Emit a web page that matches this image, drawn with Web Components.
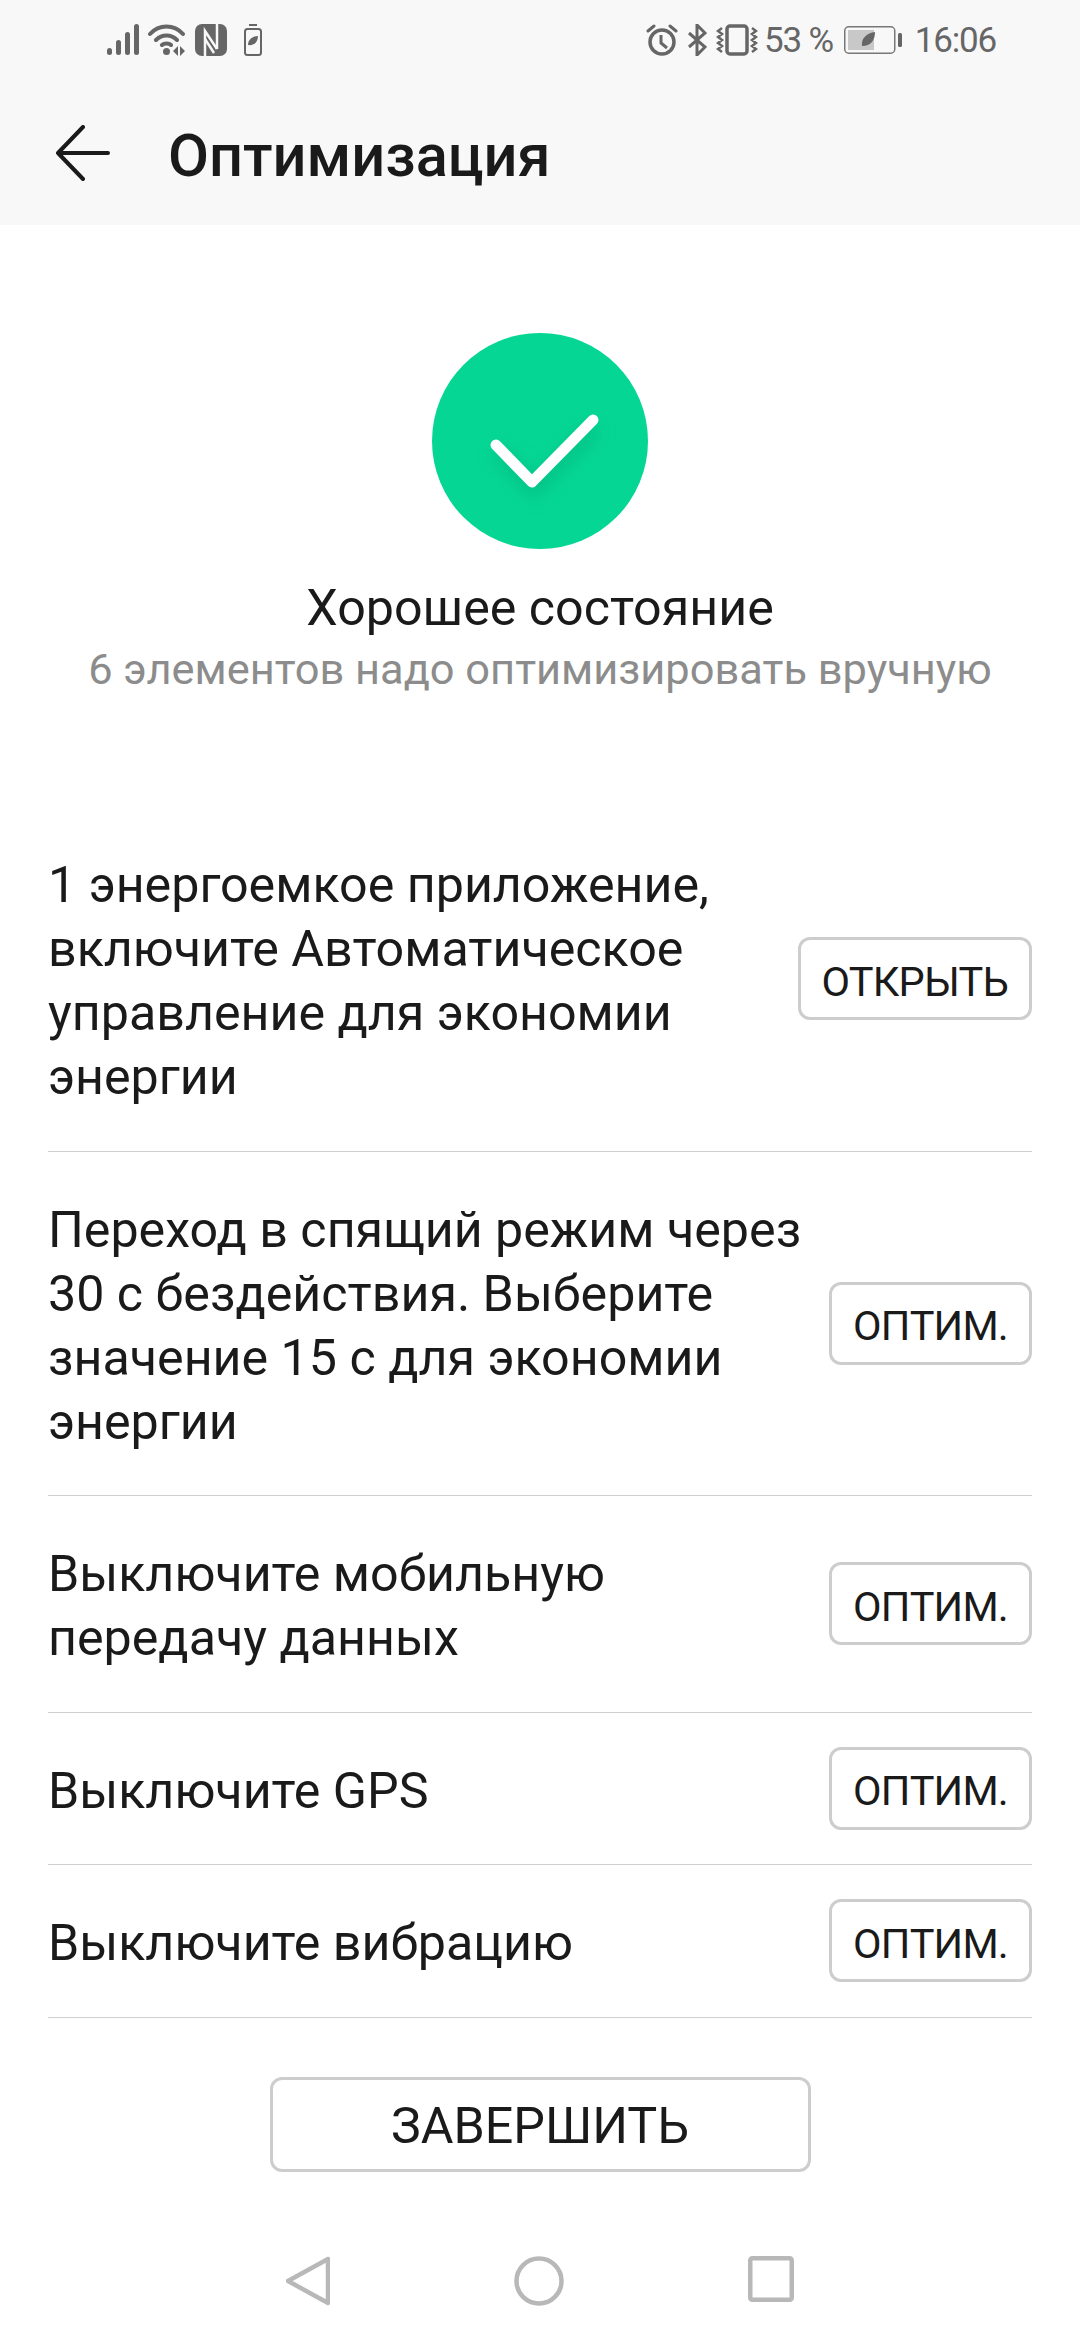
<!DOCTYPE html>
<html lang="ru">
<head>
<meta charset="utf-8">
<title>Оптимизация</title>
<style>
  html, body { margin: 0; background: #fff; }
  body { width: 1080px; height: 2340px; overflow: hidden; font-family: Roboto, "Noto Sans", sans-serif; color: #1a1a1a; }
</style>
</head>
<body>
<status-bar></status-bar>
<app-bar>Оптимизация</app-bar>
<opt-hero heading="Хорошее состояние" sub="6 элементов надо оптимизировать вручную"></opt-hero>
<opt-list>
  <opt-row action="ОТКРЫТЬ">1 энергоемкое приложение, включите Автоматическое управление для экономии энергии</opt-row>
  <opt-row action="ОПТИМ.">Переход в спящий режим через 30 с бездействия. Выберите значение 15 с для экономии энергии</opt-row>
  <opt-row action="ОПТИМ.">Выключите мобильную передачу данных</opt-row>
  <opt-row action="ОПТИМ.">Выключите GPS</opt-row>
  <opt-row action="ОПТИМ.">Выключите вибрацию</opt-row>
</opt-list>
<finish-bar>ЗАВЕРШИТЬ</finish-bar>
<nav-bar></nav-bar>

<script>
// status bar, all icons drawn by hand
class StatusBar extends HTMLElement {
  constructor () {
    super();
    this.attachShadow({mode: 'open'}).innerHTML = `
      <style>
      :host {
        display: flex;
        align-items: center;
        height: 80px;
        box-sizing: border-box;
        padding: 0 84px 0 107px;
        background: #f8f8f8;
        color: #666;
        font: 35px Roboto, sans-serif;
        letter-spacing: -1.2px;
      }
      svg { display: block; flex: none; }
      .spacer { flex: 1; }
      .pct { margin-left: 6px; }
      .time { margin-left: 13px; }
      </style>
      <svg width="32" height="32" viewBox="0 0 32 32" fill="#666" style="margin-right:9px">
        <rect x="0" y="24" width="5" height="7" rx="2.5"/>
        <rect x="9" y="16" width="5" height="15" rx="2.5"/>
        <rect x="18" y="8" width="5" height="23" rx="2.5"/>
        <rect x="27" y="0" width="5" height="31" rx="2.5"/>
      </svg>
      <svg width="38" height="32" viewBox="0 0 38 32" style="margin-right:9px">
        <path d="M2 10C11 0 26 0 35 10M8 16C14 10 23 10 29 16M14 21C16 19 21 19 23 21" fill="none" stroke="#666" stroke-width="4" stroke-linecap="round"/>
        <circle cx="18.500" cy="27.500" r="3.500" fill="#666"/>
        <path d="M25 27l5-5v10zM32 22v10l5-5z" fill="#666"/>
      </svg>
      <svg width="32" height="32" viewBox="0 0 32 32" style="margin-right:17px">
        <rect width="32" height="32" rx="7" fill="#666"/>
        <path d="M10 32V7l12 18" fill="none" stroke="#f8f8f8" stroke-width="2.500"/>
        <path d="M22 0v25M10 15l9 14" fill="none" stroke="#f8f8f8" stroke-width="2.500"/>
      </svg>
      <svg width="18" height="32" viewBox="0 0 18 32">
        <path d="M5 1h8" stroke="#666" stroke-width="2"/>
        <rect x="1" y="5" width="16" height="26" rx="2.500" fill="none" stroke="#666" stroke-width="2"/>
        <path d="M4 21C4 15 9 12 14 12C14 18 10 22 4 21z" fill="#666"/>
      </svg>
      <div class="spacer"></div>
      <svg width="32" height="32" viewBox="0 0 32 32" style="margin-right:9px">
        <circle cx="16" cy="18" r="12" fill="none" stroke="#666" stroke-width="3.500"/>
        <path d="M15 11v8l6 5" fill="none" stroke="#666" stroke-width="3"/>
        <path d="M2 7l6-5M30 7l-6-5" stroke="#666" stroke-width="3" stroke-linecap="round"/>
      </svg>
      <svg width="20" height="32" viewBox="0 0 20 32" style="margin-right:9px">
        <path d="M2 9l16 14-8 8V1l8 8L2 23" fill="none" stroke="#666" stroke-width="3"/>
      </svg>
      <svg width="42" height="32" viewBox="0 0 42 32">
        <rect x="11" y="2" width="20" height="28" rx="3" fill="none" stroke="#666" stroke-width="3.500"/>
        <path d="M6 4l-4 3 4 3-4 3 4 3-4 3 4 3-4 3 4 3M36 4l4 3-4 3 4 3-4 3 4 3-4 3 4 3-4 3" fill="none" stroke="#666" stroke-width="2.500"/>
      </svg>
      <span class="pct">53 %</span>
      <svg width="58" height="28" viewBox="0 0 58 28" style="margin-left:11px">
        <rect x="0.750" y="0.750" width="50" height="26.500" rx="4" fill="none" stroke="#777" stroke-width="1.500"/>
        <rect x="4" y="4" width="26" height="20" fill="#c8c8c8"/>
        <path d="M18 20C17 12 23 7 31 6C31 14 27 20 18 20z" fill="#666"/>
        <rect x="54" y="7" width="4" height="14" rx="1.500" fill="#666"/>
      </svg>
      <span class="time">16:06</span>
    `;
  }
}
customElements.define('status-bar', StatusBar);

class AppBar extends HTMLElement {
  constructor () {
    super();
    this.attachShadow({mode: 'open'}).innerHTML = `
      <style>
      :host {
        display: flex;
        align-items: center;
        height: 145px;
        box-sizing: border-box;
        padding: 0 0 0 55px;
        background: #f8f8f8;
        color: #1a1a1a;
        font: 500 59.500px Roboto, sans-serif;
      }
      svg { display: block; margin-right: 57px; flex: none; }
      .title { padding-top: 6px; }
      </style>
      <svg width="56" height="56" viewBox="0 0 56 56">
        <path d="M28 2L3 28l25 26M3 28h50" fill="none" stroke="#1a1a1a" stroke-width="4" stroke-linecap="round" stroke-linejoin="round"/>
      </svg>
      <div class="title"><slot></slot></div>
    `;
  }
}
customElements.define('app-bar', AppBar);

class OptHero extends HTMLElement {
  constructor () {
    super();
    const root = this.attachShadow({mode: 'open'});
    root.innerHTML = `
      <style>
      :host {
        display: flex;
        flex-direction: column;
        align-items: center;
        height: 582px;
        padding-top: 108px;
        box-sizing: border-box;
      }
      svg { display: block; }
      .heading { margin-top: 27px; font-size: 50.200px; line-height: 64px; color: #1a1a1a; }
      .sub { margin-top: 2px; font-size: 43.400px; line-height: 56px; color: #8c8c8c; }
      </style>
      <svg width="216" height="216" viewBox="0 0 216 216">
        <defs>
          <filter id="soft" x="-30%" y="-30%" width="160%" height="170%">
            <feGaussianBlur stdDeviation="9"/>
          </filter>
        </defs>
        <circle cx="108" cy="108" r="108" fill="#05d694"/>
        <polyline points="64,112 100,149 161,87" transform="translate(2 7)" fill="none" stroke="#00a874" stroke-opacity="0.55" stroke-width="12" filter="url(#soft)"/>
        <polyline points="64,112 100,149 161,87" fill="none" stroke="#fff" stroke-width="11" stroke-linecap="round" stroke-linejoin="round"/>
      </svg>
      <div class="heading"></div>
      <div class="sub"></div>
    `;
    root.querySelector('.heading').textContent = this.getAttribute('heading');
    root.querySelector('.sub').textContent = this.getAttribute('sub');
  }
}
customElements.define('opt-hero', OptHero);

class OptList extends HTMLElement {
  constructor () {
    super();
    this.attachShadow({mode: 'open'}).innerHTML = `
      <style>
      :host { display: flex; flex-direction: column; padding: 0 48px; }
      </style>
      <slot></slot>
    `;
  }
}
customElements.define('opt-list', OptList);

class OutlineButton extends HTMLElement {
  constructor () {
    super();
    this.attachShadow({mode: 'open'}).innerHTML = `
      <style>
      :host {
        display: flex;
        align-items: center;
        justify-content: center;
        box-sizing: border-box;
        flex: none;
        height: 83px;
        padding: 6px 21px 0;
        border: 3px solid #cdcdcd;
        border-radius: 12px;
        background: #fff;
        color: #1a1a1a;
        font-size: 41.500px;
        letter-spacing: -0.800px;
      }
      </style>
      <slot></slot>
    `;
  }
}
customElements.define('outline-button', OutlineButton);

class OptRow extends HTMLElement {
  constructor () {
    super();
    const root = this.attachShadow({mode: 'open'});
    root.innerHTML = `
      <style>
      :host {
        display: flex;
        align-items: center;
        justify-content: space-between;
        gap: 24px;
        border-bottom: 1px solid #cfcfcf;
        font-size: 50.200px;
        line-height: 64px;
        color: #1a1a1a;
      }
      .text { flex: 1; min-width: 0; padding: 46px 0 41.500px; }
      </style>
      <div class="text"><slot></slot></div>
      <outline-button></outline-button>
    `;
    root.querySelector('outline-button').textContent = this.getAttribute('action');
  }
}
customElements.define('opt-row', OptRow);

class FinishBar extends HTMLElement {
  constructor () {
    super();
    this.attachShadow({mode: 'open'}).innerHTML = `
      <style>
      :host { display: flex; justify-content: center; padding-top: 59.500px; }
      outline-button { width: 541px; height: 95px; padding: 2px 0 0; font-size: 50.200px; letter-spacing: 0; }
      </style>
      <outline-button><slot></slot></outline-button>
    `;
  }
}
customElements.define('finish-bar', FinishBar);

class NavBar extends HTMLElement {
  constructor () {
    super();
    this.attachShadow({mode: 'open'}).innerHTML = `
      <style>
      :host {
        display: flex;
        justify-content: center;
        gap: 184px;
        padding-top: 84px;
      }
      svg { display: block; }
      </style>
      <svg width="44" height="50" viewBox="0 0 44 50">
        <path d="M42 3L2 25l40 22z" fill="none" stroke="#b8b8b8" stroke-width="4.500" stroke-linejoin="round"/>
      </svg>
      <svg width="50" height="50" viewBox="0 0 50 50">
        <circle cx="25" cy="25" r="22.500" fill="none" stroke="#b8b8b8" stroke-width="4.500"/>
      </svg>
      <svg width="46" height="46" viewBox="0 0 46 46">
        <rect x="2.250" y="2.250" width="41.500" height="41.500" rx="2" fill="none" stroke="#b8b8b8" stroke-width="4.500"/>
      </svg>
    `;
  }
}
customElements.define('nav-bar', NavBar);
</script>
</body>
</html>
